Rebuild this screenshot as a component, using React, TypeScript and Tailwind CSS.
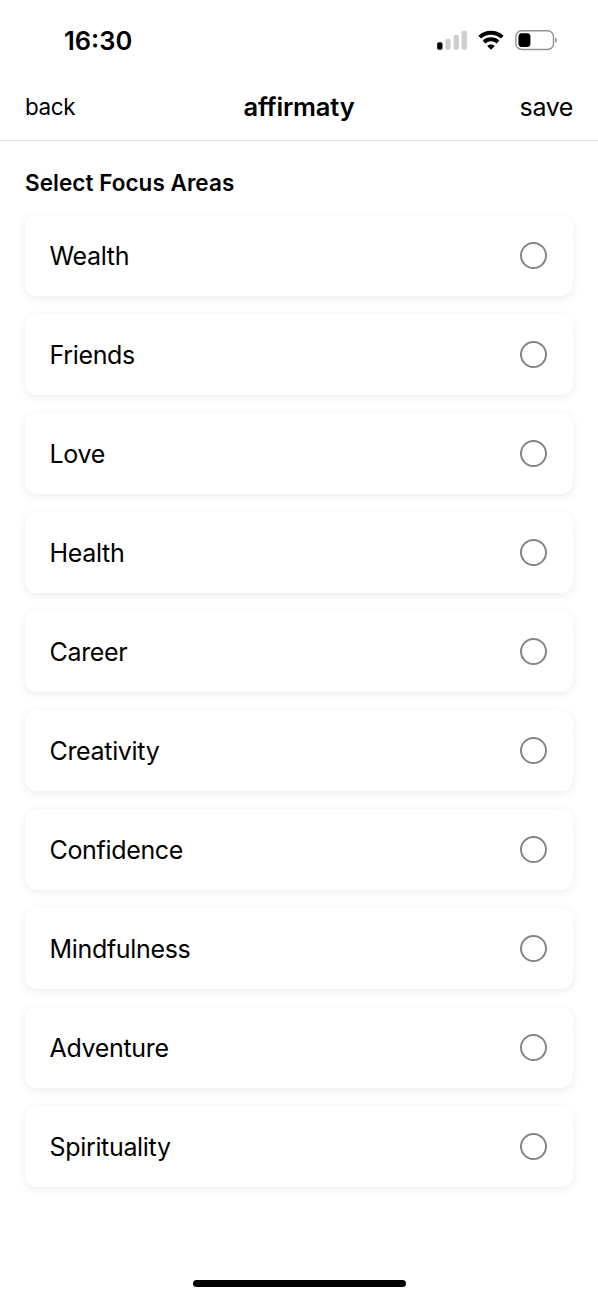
const areas = ["Wealth", "Friends", "Love", "Health", "Career", "Creativity", "Confidence", "Mindfulness", "Adventure", "Spirituality"];

function StatusIcons() {
  return (
    <svg width="122" height="24" viewBox="0 0 122 24" fill="none">
      <rect x="1.2" y="14.3" width="5.3" height="7.4" rx="1.6" fill="#000" />
      <rect x="9.4" y="10.8" width="5.3" height="10.9" rx="1.6" fill="#cecece" />
      <rect x="17.6" y="6.8" width="5.3" height="14.9" rx="1.6" fill="#cecece" />
      <rect x="25.6" y="2.8" width="5.3" height="18.9" rx="1.6" fill="#cecece" />
      <g stroke="#000" strokeWidth="3.9">
        <path d="M43.7 9.2a16.5 16.5 0 0 1 22.6 0" />
        <path d="M48 14a10.2 10.2 0 0 1 14 0" />
      </g>
      <path d="M55 21.7l-3.8-3.8a5.6 5.6 0 0 1 7.6 0z" fill="#000" />
      <rect x="79.9" y="2.7" width="37.6" height="18.8" rx="5.8" stroke="#929292" strokeWidth="1.4" />
      <rect x="82.4" y="5.2" width="12" height="13.8" rx="3.4" fill="#000" />
      <path d="M119.2 9.4v5.4c2.4-.9 2.4-4.5 0-5.4z" fill="#929292" />
    </svg>
  );
}

export default function App() {
  return (
    <div className="flex h-[1300px] w-[598px] flex-col bg-white font-['Inter',sans-serif] text-black">
      <div className="flex h-20 items-center justify-between pl-16 pr-10">
        <span className="pt-[2px] text-[25.5px] font-semibold">16:30</span>
        <StatusIcons />
      </div>
      <header className="grid h-[61px] grid-cols-3 items-center border-b border-[#e5e5e5] px-[25px] pb-[5px]">
        <button className="pb-[2px] text-left text-[22.5px] font-[380] tracking-[-0.4px]">back</button>
        <h1 className="text-center text-[25.5px] font-semibold tracking-[-0.2px]">affirmaty</h1>
        <button className="pt-px text-right text-[25px] font-[380] tracking-[-0.4px]">save</button>
      </header>
      <main className="flex flex-col px-[25px] pt-6">
        <h2 className="text-[22.5px] leading-9 font-semibold tracking-[0.04px]">Select Focus Areas</h2>
        <div className="mt-[14px] flex flex-col gap-[18px]">
          {areas.map((name) => (
            <label key={name} className="flex h-[81px] items-center justify-between rounded-xl bg-white pr-[26px] pl-[25px] shadow-[0_2px_10px_rgba(0,0,0,0.08)]">
              <span className="-ml-[0.5px] pt-[2px] text-[25px] font-[380] tracking-[-0.33px]">{name}</span>
              <span className="size-[27px] rounded-full border-2 border-[#858585]" />
            </label>
          ))}
        </div>
      </main>
      <div className="mx-auto mt-auto mb-[13px] h-[7px] w-[213px] rounded-full bg-black" />
    </div>
  );
}
